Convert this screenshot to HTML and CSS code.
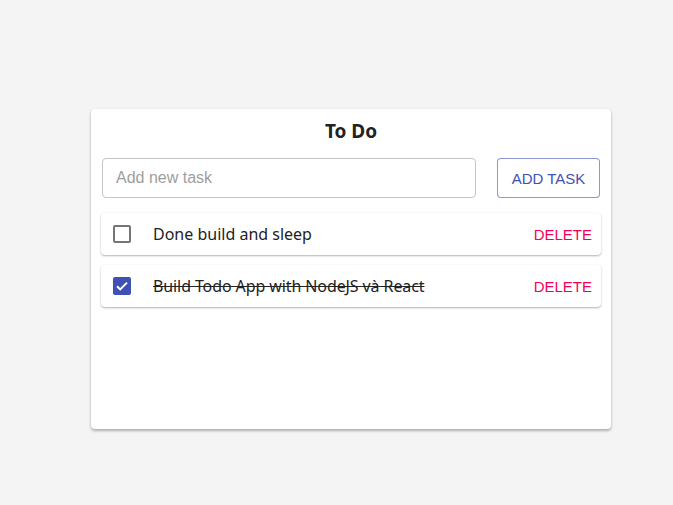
FILE: index.html
```html
<!DOCTYPE html>
<html>
<head>
<meta charset="utf-8">
<link rel="stylesheet" href="styles.css">
</head>
<body>
<div class="page">
  <div class="card">
    <h1 class="title">To Do</h1>
    <div class="form">
      <input class="input" type="text" placeholder="Add new task">
      <button class="add">ADD TASK</button>
    </div>
    <div class="list">
      <div class="item">
        <span class="box"></span>
        <span class="text">Done build and sleep</span>
        <span class="del">DELETE</span>
      </div>
      <div class="item">
        <span class="box checked"><svg viewBox="0 0 18 18" width="18" height="18"><path d="M4 9.2l3.2 3.2L14 5.6" fill="none" stroke="#fff" stroke-width="2"/></svg></span>
        <span class="text done">Build Todo App with NodeJS và React</span>
        <span class="del">DELETE</span>
      </div>
    </div>
  </div>
</div>
</body>
</html>
```

FILE: styles.css
```css
html, body { margin: 0; padding: 0; }
body { background: #f4f4f4; width: 673px; height: 505px; overflow: hidden; font-family: "Liberation Sans", Arial, sans-serif; }
.page { padding-top: 109px; padding-left: 91px; }
.card {
  width: 520px; height: 320px; box-sizing: border-box;
  background: #fff; border-radius: 4px;
  box-shadow: 0 2px 3px rgba(0,0,0,0.28), 0 0 2px rgba(0,0,0,0.08);
  padding: 10px 10px;
}
.title {
  margin: 0; text-align: center; font-family: "Noto Sans", sans-serif; font-weight: 700;
  font-size: 19px; line-height: 24px; color: #222; height: 39px; box-sizing: border-box;
}
.form { display: flex; align-items: center; justify-content: space-between; padding: 0 0 0 1px; }
.input {
  width: 374px; height: 40px; box-sizing: border-box; border: 1px solid #c4c4c4; border-radius: 4px;
  padding: 0 13px; font-family: "Liberation Sans", Arial, sans-serif; font-size: 16px; color: #333; outline: none;
}
.input::placeholder { color: #9e9e9e; }
.add {
  width: 103px; height: 40px; box-sizing: border-box; border: 1px solid rgba(63,81,181,0.6); border-radius: 4px;
  background: #fff; color: #3f51b5; font-family: "Liberation Sans", Arial, sans-serif; font-size: 15px;
  margin-right: 1px; padding: 0;
}
.list { margin-top: 15px; display: flex; flex-direction: column; gap: 10px; }
.item {
  height: 42px; display: flex; align-items: center; border-radius: 4px; background: #fff;
  box-shadow: 0 1px 2px rgba(0,0,0,0.3), 0 0 1px rgba(0,0,0,0.06);
  padding: 0 9px 0 12px;
}
.box {
  width: 18px; height: 18px; box-sizing: border-box; border: 2px solid #757575; border-radius: 2px; flex: none;
  display: flex;
}
.box.checked { background: #3f51b5; border: none; }
.text {
  margin-left: 22px; flex: 1; font-family: "Noto Sans", sans-serif; font-size: 16px; color: #222;
}
.text.done { text-decoration: line-through; letter-spacing: -0.1px; }
.del { color: #f50057; font-size: 15px; font-family: "Liberation Sans", Arial, sans-serif; }
```
